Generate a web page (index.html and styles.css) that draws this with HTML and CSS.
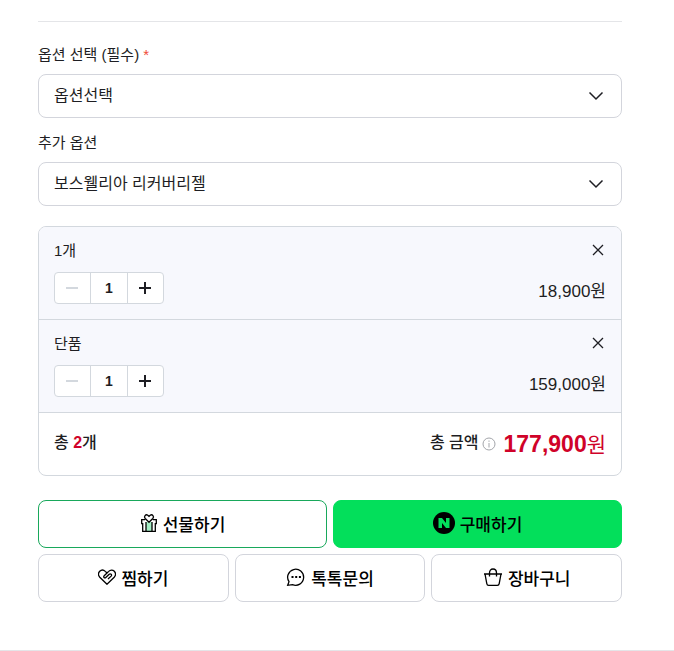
FILE: index.html
```html
<!DOCTYPE html>
<html lang="ko">
<head>
<meta charset="utf-8">
<meta name="viewport" content="width=device-width, initial-scale=1">
<title>옵션 선택</title>
<link rel="stylesheet" href="styles.css">
</head>
<body>
<main class="purchase">
  <form class="purchase-form">
    <div class="field">
      <label class="field-label" for="option">옵션 선택 (필수)<span class="required">*</span></label>
      <div class="select-wrap">
        <select class="select" id="option"><option>옵션선택</option></select>
        <svg class="chevron" viewBox="0 0 16 10" aria-hidden="true"><path d="M1.500 1.500 8 8l6.500-6.500"/></svg>
      </div>
    </div>
    <div class="field">
      <label class="field-label" for="extra">추가 옵션</label>
      <div class="select-wrap">
        <select class="select" id="extra"><option>보스웰리아 리커버리젤</option></select>
        <svg class="chevron" viewBox="0 0 16 10" aria-hidden="true"><path d="M1.500 1.500 8 8l6.500-6.500"/></svg>
      </div>
    </div>

    <section class="summary">
      <div class="item">
        <div class="item-row">
          <span class="item-name">1개</span>
          <button class="remove" type="button" aria-label="삭제"><svg viewBox="0 0 12 12"><path d="m1 1 10 10M11 1 1 11"/></svg></button>
        </div>
        <div class="item-row item-bottom">
          <div class="quantity">
            <button class="step step-off" type="button" aria-label="수량 감소"><svg viewBox="0 0 12 12"><path d="M0 6h12"/></svg></button>
            <input class="count" type="text" value="1" aria-label="수량">
            <button class="step" type="button" aria-label="수량 증가"><svg viewBox="0 0 12 12"><path d="M0 6h12M6 0v12"/></svg></button>
          </div>
          <span class="price">18,900원</span>
        </div>
      </div>
      <div class="item">
        <div class="item-row">
          <span class="item-name">단품</span>
          <button class="remove" type="button" aria-label="삭제"><svg viewBox="0 0 12 12"><path d="m1 1 10 10M11 1 1 11"/></svg></button>
        </div>
        <div class="item-row item-bottom">
          <div class="quantity">
            <button class="step step-off" type="button" aria-label="수량 감소"><svg viewBox="0 0 12 12"><path d="M0 6h12"/></svg></button>
            <input class="count" type="text" value="1" aria-label="수량">
            <button class="step" type="button" aria-label="수량 증가"><svg viewBox="0 0 12 12"><path d="M0 6h12M6 0v12"/></svg></button>
          </div>
          <span class="price">159,000원</span>
        </div>
      </div>
      <div class="total">
        <span class="total-text">총 <strong class="total-count">2</strong>개</span>
        <div class="total-sum">
          <span class="total-text">총 금액</span>
          <button class="info" type="button" aria-label="총 금액 안내"><svg viewBox="0 0 14 14"><circle cx="7" cy="7" r="6"/><path d="M7 6v4.500M7 3.500v1.300"/></svg></button>
          <span class="amount"><strong>177,900</strong><span class="won">원</span></span>
        </div>
      </div>
    </section>

    <div class="actions">
      <div class="action-row">
        <button class="action gift" type="button">
          <svg class="icon icon-gift" viewBox="0 0 18 20" aria-hidden="true"><path class="ribbon" d="M6 9h6v9H6z"/><path d="M5 6.700H1.700v4h1V18.300h12.600v-7.600h1v-4H13M6 9v9M12 9v9M9 9.300 5.200 5.500C3.400 3.500 5.700.9 7.800 2.200L9 3.300l1.200-1.100c2.100-1.300 4.400 1.300 2.600 3.300z"/></svg>
          선물하기
        </button>
        <button class="action buy" type="button">
          <svg class="icon icon-pay" viewBox="0 0 22 22" aria-hidden="true"><circle cx="11" cy="11" r="11"/><path d="M5.500 6H9l4 5V6h3.500v10H13l-4-5v5H5.500z"/></svg>
          구매하기
        </button>
      </div>
      <div class="action-row">
        <button class="action" type="button">
          <svg class="icon icon-wish" viewBox="1 1 18 16" aria-hidden="true"><path d="M10 16.200 2.800 9.200C1.200 7.400 1.200 4.900 2.700 3.300c1.600-1.600 4-1.500 5.600.1L10 5l1.700-1.600c1.600-1.600 4-1.700 5.600-.1 1.500 1.600 1.500 4.100-.1 5.900zM10 5 7.200 7.700c-1.200 1.200.4 2.900 1.600 1.800l3.400-3.200c1.300-1.200 3.200.5 1.900 1.800L11 11"/></svg>
          찜하기
        </button>
        <button class="action" type="button">
          <svg class="icon" viewBox="0 0 20 20" aria-hidden="true"><path d="M1.700 18.300 3 14.700A8 8 0 1 1 6.500 17.600z"/><path class="dots" d="M5.500 9h2v2h-2zM9.200 9h2v2h-2zM12.900 9h2v2h-2z"/></svg>
          톡톡문의
        </button>
        <button class="action" type="button">
          <svg class="icon" viewBox="0 0 20 20" aria-hidden="true"><path d="M1 7h18M2 7l1.800 9.600c.2 1.200.8 1.700 1.800 1.700h8.800c1 0 1.600-.5 1.800-1.700L18 7M6.500 9.500V6c0-2.500 1.300-4 3.500-4s3.500 1.500 3.500 4v3.500"/></svg>
          장바구니
        </button>
      </div>
    </div>
  </form>
</main>
</body>
</html>
```
FILE: styles.css
```css
* {
  box-sizing: border-box;
}

body {
  margin: 0;
  background: #fff;
  color: #1e1e23;
  font-family: "Liberation Sans", "Noto Sans CJK KR", sans-serif;
  font-size: 16px;
}

button,
input,
select {
  margin: 0;
  padding: 0;
  color: inherit;
  font: inherit;
}

button {
  border: 0;
  background: none;
  cursor: pointer;
}

svg {
  display: block;
  fill: none;
  stroke: currentColor;
}

.purchase {
  padding: 21px 52px 48px 38px;
  border-bottom: 1px solid #e4e5e8;
}

.purchase-form {
  padding-top: 20px;
  border-top: 1px solid #e4e5e8;
}

.field {
  margin-bottom: 12px;
}

.field-label {
  display: block;
  height: 32px;
  line-height: 26px;
  font-size: 15px;
}

.required {
  margin-left: 4px;
  color: #f04a38;
}

.select-wrap {
  position: relative;
}

.select {
  display: block;
  width: 100%;
  height: 44px;
  padding: 0 44px 2px 15px;
  border: 1px solid #d3d5dc;
  border-radius: 8px;
  background: #fff;
  appearance: none;
}

.chevron {
  position: absolute;
  top: 17px;
  right: 18px;
  width: 16px;
  height: 10px;
  stroke-width: 1.5;
  pointer-events: none;
}

.summary {
  margin-top: 20px;
  border: 1px solid #d3d8de;
  border-radius: 8px;
  overflow: hidden;
}

.item {
  padding: 12px 15px 15px;
  border-bottom: 1px solid #d3d8de;
  background: #f7f8fd;
}

.item-row {
  display: flex;
  align-items: center;
  justify-content: space-between;
}

.item-name {
  height: 24px;
  font-size: 15px;
  line-height: 24px;
}

.remove {
  padding: 2px 2px 4px;
}

.remove svg {
  width: 12px;
  height: 12px;
  stroke-width: 1.3;
}

.item-bottom {
  align-items: flex-end;
  margin-top: 9px;
}

.quantity {
  display: flex;
  width: 110px;
  height: 32px;
  border: 1px solid #d3d8de;
  border-radius: 4px;
  background: #fff;
}

.step {
  display: flex;
  flex: 1;
  align-items: center;
  justify-content: center;
  padding-right: 2px;
}

.step svg {
  width: 12px;
  height: 12px;
  stroke-width: 2;
}

.step-off {
  color: #d3d8de;
}

.count {
  width: 38px;
  border: solid #d3d8de;
  border-width: 0 1px;
  background: none;
  font-size: 14px;
  font-weight: 700;
  text-align: center;
}

.price {
  font-size: 17px;
  line-height: 24px;
}

.total {
  display: flex;
  align-items: center;
  justify-content: space-between;
  height: 62px;
  padding: 0 15px;
}

.total-text {
  padding-bottom: 2px;
  line-height: 24px;
  font-weight: 500;
}

.total-count,
.amount {
  color: #d00229;
}

.total-count {
  font-weight: 700;
}

.total-sum {
  display: flex;
  align-items: center;
}

.info {
  margin: 0 8px 0 3px;
  color: #a3a5aa;
}

.info svg {
  width: 14px;
  height: 14px;
}

.amount {
  font-size: 23px;
  line-height: 32px;
}

.won {
  font-size: 21px;
}

.actions {
  display: grid;
  gap: 6px;
  margin-top: 24px;
}

.action-row {
  display: flex;
  gap: 6px;
}

.action {
  display: flex;
  flex: 1;
  align-items: center;
  justify-content: center;
  gap: 5px;
  height: 48px;
  padding-bottom: 2px;
  border: 1px solid #d3d5dc;
  border-radius: 8px;
  background: #fff;
  color: #000;
  font-size: 17px;
  font-weight: 500;
}

.gift {
  border-color: #18a85b;
}

.buy {
  border-color: #03df5b;
  background: #03df5b;
}

.icon {
  width: 20px;
  height: 20px;
  stroke-width: 1.3;
}

.icon-gift {
  width: 18px;
}

.icon-pay {
  width: 22px;
  height: 22px;
  stroke: none;
}

.icon-pay circle {
  fill: #000;
}

.icon-pay path {
  fill: #03df5b;
}

.icon-wish {
  width: 18px;
  height: 16px;
}

.ribbon {
  fill: #a5edc5;
  stroke: none;
}

.dots {
  fill: #000;
  stroke: none;
}
```
